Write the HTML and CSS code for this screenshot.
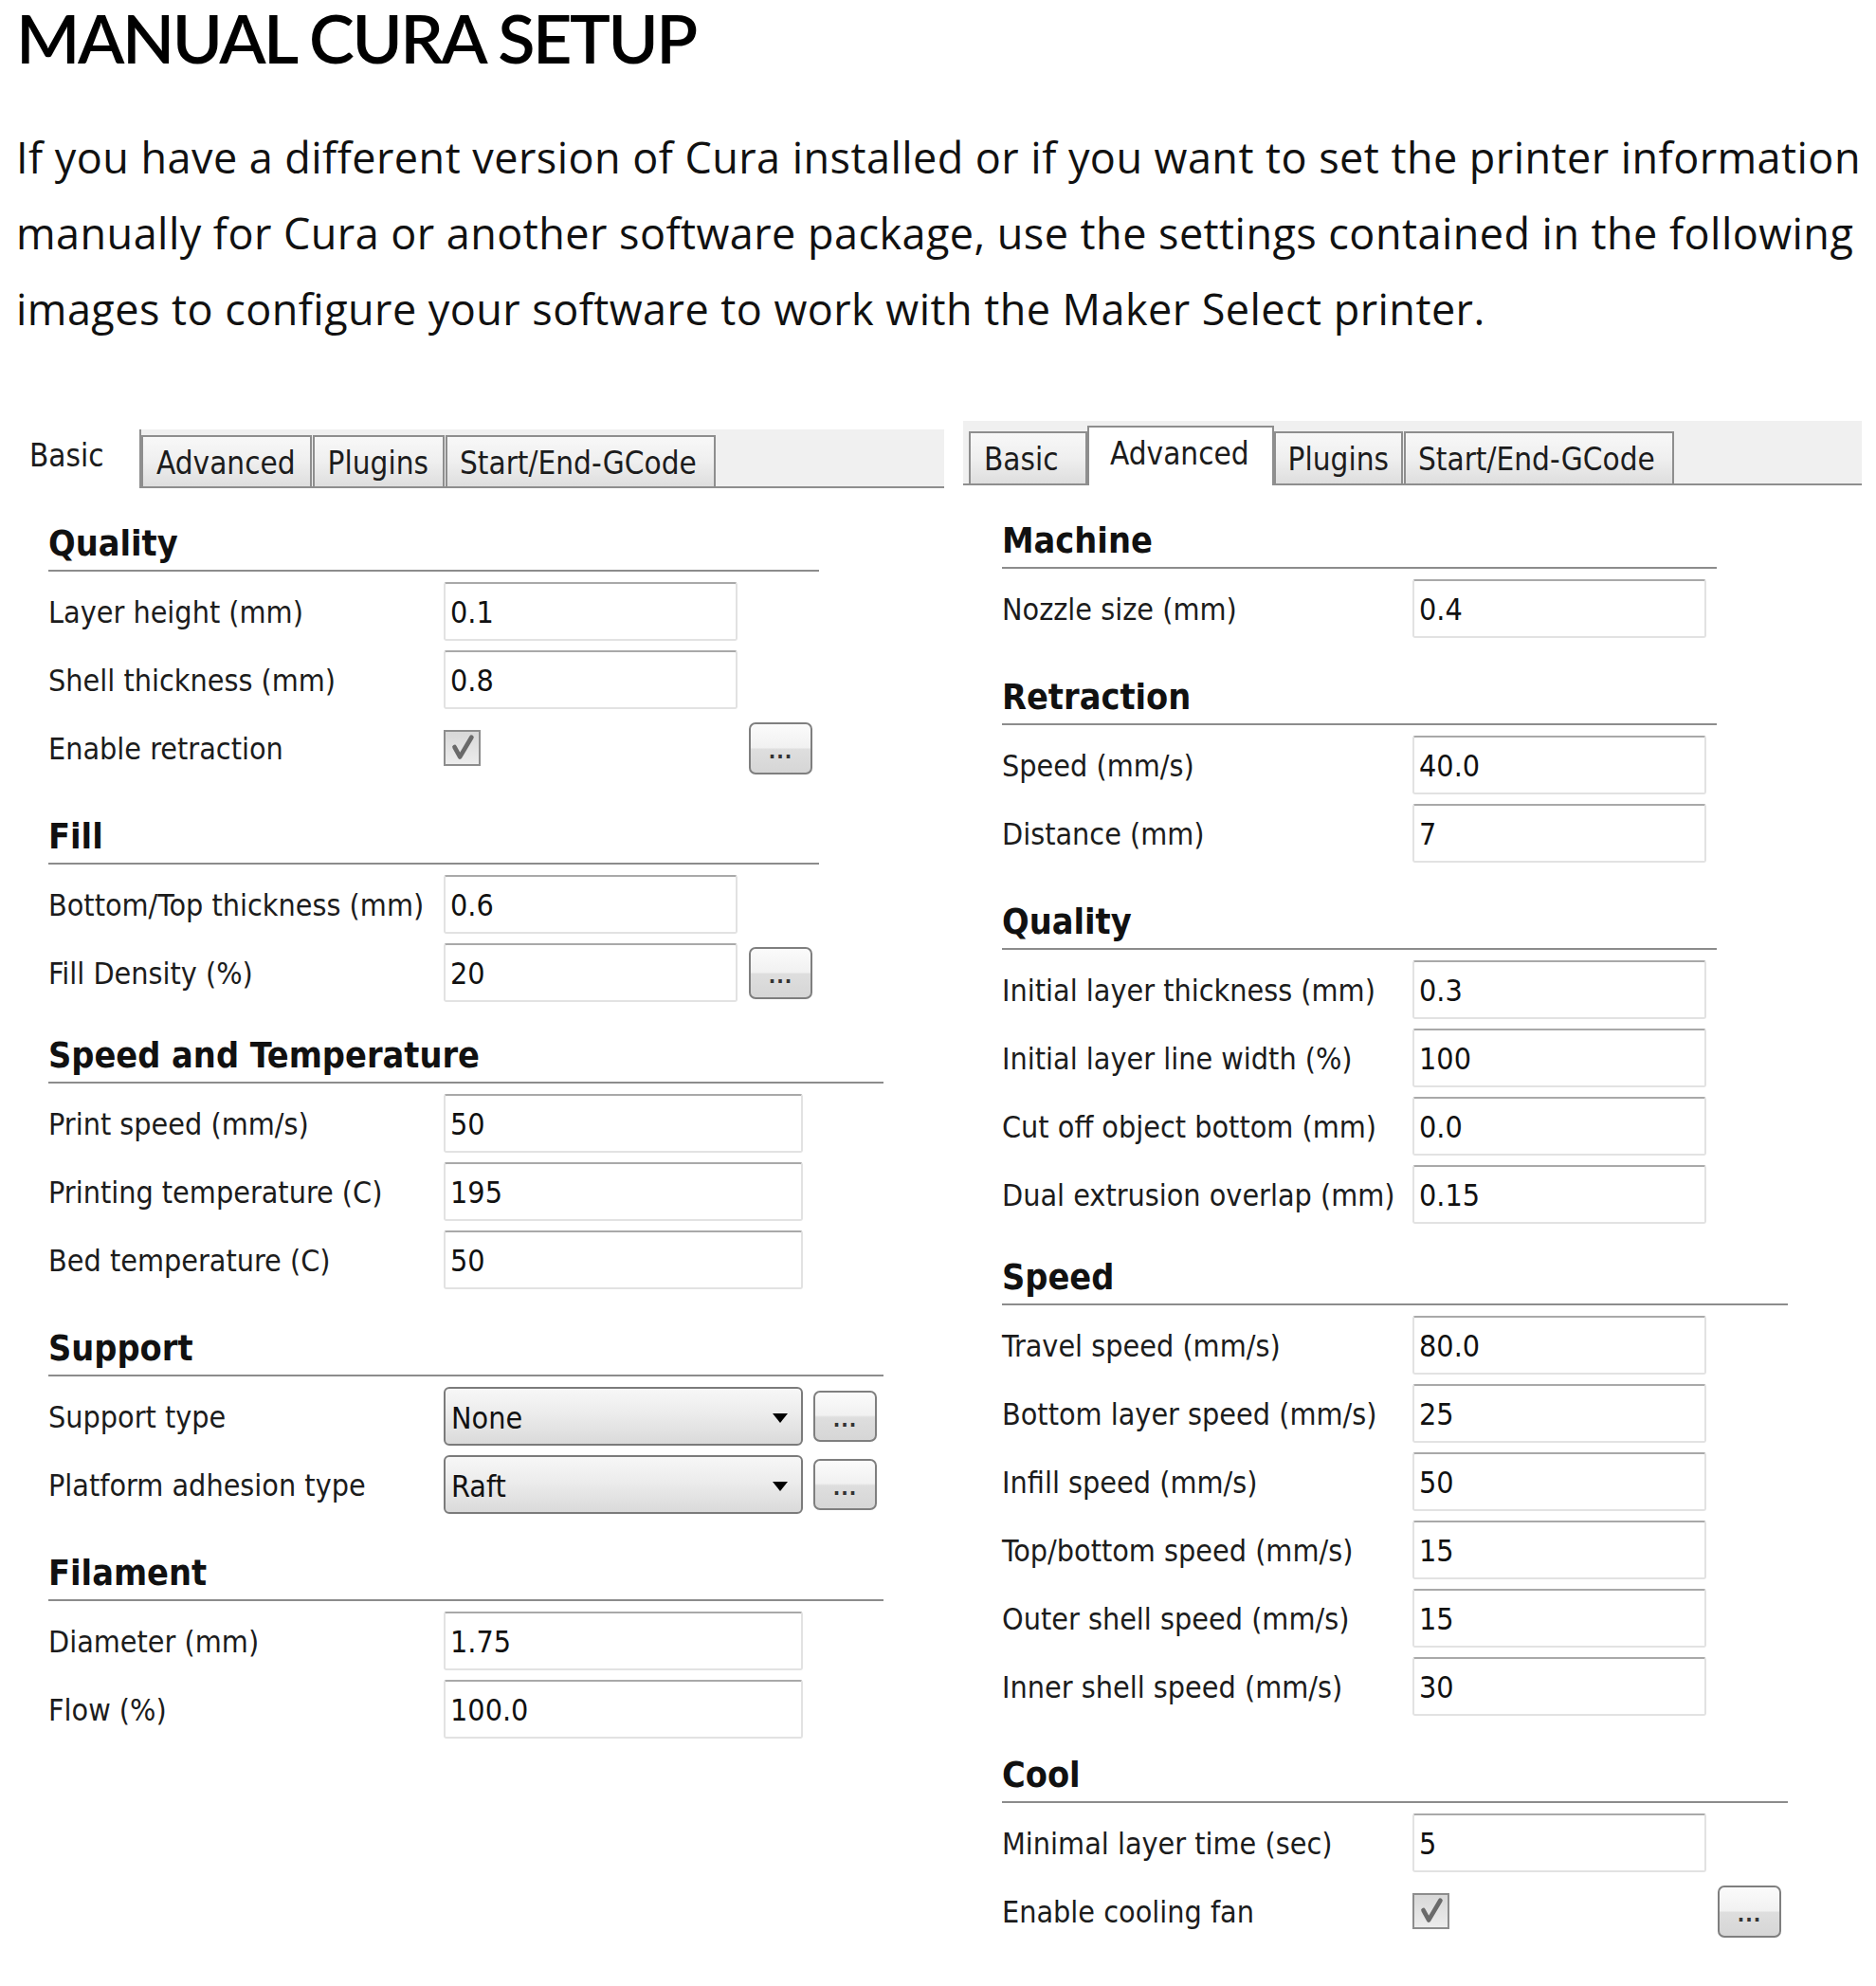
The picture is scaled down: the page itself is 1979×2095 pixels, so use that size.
FILE: index.html
```html
<!DOCTYPE html>
<html lang="en">
<head>
<meta charset="utf-8">
<title>Manual Cura Setup</title>
<link rel="stylesheet" href="styles.css">
</head>
<body>
<div class="page">
  <h1 class="title">MANUAL CURA SETUP</h1>
  <p class="intro">If you have a different version of Cura installed or if you want to set the printer information<br>manually for Cura or another software package, use the settings contained in the following<br>images to configure your software to work with the Maker Select printer.</p>

  <div class="panels">
    <section class="panel panel-basic">
      <div class="tabbar">
        <div class="tab tab-active">Basic</div>
        <div class="tab">Advanced</div>
        <div class="tab">Plugins</div>
        <div class="tab">Start/End-GCode</div>
      </div>
      <div class="panel-body">
        <div class="group group-narrow">
          <h2 class="group-title">Quality</h2>
          <div class="row"><span class="label">Layer height (mm)</span><span class="field">0.1</span></div>
          <div class="row"><span class="label">Shell thickness (mm)</span><span class="field">0.8</span></div>
          <div class="row"><span class="label">Enable retraction</span><span class="check-cell"><span class="check"><svg viewBox="0 0 36 34" width="34" height="32"><path d="M9 16 L15 27 L28 5" fill="none" stroke="#6a6a6a" stroke-width="5" stroke-linecap="round" stroke-linejoin="round"/></svg></span></span><span class="more">...</span></div>
        </div>
        <div class="group group-narrow">
          <h2 class="group-title">Fill</h2>
          <div class="row"><span class="label">Bottom/Top thickness (mm)</span><span class="field">0.6</span></div>
          <div class="row"><span class="label">Fill Density (%)</span><span class="field">20</span><span class="more">...</span></div>
        </div>
        <div class="group group-wide group-tight">
          <h2 class="group-title">Speed and Temperature</h2>
          <div class="row"><span class="label">Print speed (mm/s)</span><span class="field">50</span></div>
          <div class="row"><span class="label">Printing temperature (C)</span><span class="field">195</span></div>
          <div class="row"><span class="label">Bed temperature (C)</span><span class="field">50</span></div>
        </div>
        <div class="group group-wide">
          <h2 class="group-title">Support</h2>
          <div class="row"><span class="label">Support type</span><span class="select">None<svg class="caret" viewBox="0 0 16 10" width="16" height="10"><path d="M0 0 H16 L8 10 Z" fill="#000"/></svg></span><span class="more more-small">...</span></div>
          <div class="row"><span class="label">Platform adhesion type</span><span class="select">Raft<svg class="caret" viewBox="0 0 16 10" width="16" height="10"><path d="M0 0 H16 L8 10 Z" fill="#000"/></svg></span><span class="more more-small">...</span></div>
        </div>
        <div class="group group-wide">
          <h2 class="group-title">Filament</h2>
          <div class="row"><span class="label">Diameter (mm)</span><span class="field">1.75</span></div>
          <div class="row"><span class="label">Flow (%)</span><span class="field">100.0</span></div>
        </div>
      </div>
    </section>

    <section class="panel panel-advanced">
      <div class="tabbar">
        <div class="tab tab-basic">Basic</div>
        <div class="tab tab-active">Advanced</div>
        <div class="tab">Plugins</div>
        <div class="tab">Start/End-GCode</div>
      </div>
      <div class="panel-body">
        <div class="group group-narrow">
          <h2 class="group-title">Machine</h2>
          <div class="row"><span class="label">Nozzle size (mm)</span><span class="field">0.4</span></div>
        </div>
        <div class="group group-narrow">
          <h2 class="group-title">Retraction</h2>
          <div class="row"><span class="label">Speed (mm/s)</span><span class="field">40.0</span></div>
          <div class="row"><span class="label">Distance (mm)</span><span class="field">7</span></div>
        </div>
        <div class="group group-narrow">
          <h2 class="group-title">Quality</h2>
          <div class="row"><span class="label">Initial layer thickness (mm)</span><span class="field">0.3</span></div>
          <div class="row"><span class="label">Initial layer line width (%)</span><span class="field">100</span></div>
          <div class="row"><span class="label">Cut off object bottom (mm)</span><span class="field">0.0</span></div>
          <div class="row"><span class="label">Dual extrusion overlap (mm)</span><span class="field">0.15</span></div>
        </div>
        <div class="group group-wide group-tight">
          <h2 class="group-title">Speed</h2>
          <div class="row"><span class="label">Travel speed (mm/s)</span><span class="field">80.0</span></div>
          <div class="row"><span class="label">Bottom layer speed (mm/s)</span><span class="field">25</span></div>
          <div class="row"><span class="label">Infill speed (mm/s)</span><span class="field">50</span></div>
          <div class="row"><span class="label">Top/bottom speed (mm/s)</span><span class="field">15</span></div>
          <div class="row"><span class="label">Outer shell speed (mm/s)</span><span class="field">15</span></div>
          <div class="row"><span class="label">Inner shell speed (mm/s)</span><span class="field">30</span></div>
        </div>
        <div class="group group-wide">
          <h2 class="group-title">Cool</h2>
          <div class="row"><span class="label">Minimal layer time (sec)</span><span class="field">5</span></div>
          <div class="row"><span class="label">Enable cooling fan</span><span class="check-cell"><span class="check"><svg viewBox="0 0 36 34" width="34" height="32"><path d="M9 16 L15 27 L28 5" fill="none" stroke="#6a6a6a" stroke-width="5" stroke-linecap="round" stroke-linejoin="round"/></svg></span></span><span class="more">...</span></div>
        </div>
      </div>
    </section>
  </div>
</div>
</body>
</html>
```

FILE: styles.css
```css
html, body {
  margin: 0;
  padding: 0;
  background: #ffffff;
}

.page {
  padding: 0 0 0 17px;
  color: #000;
}

.title {
  margin: 3px 0 0 0;
  font-family: "Lato", "Open Sans", sans-serif;
  font-weight: 600;
  font-size: 72px;
  line-height: 72px;
  letter-spacing: -2.5px;
  color: #000;
}

.intro {
  margin: 51px 0 0 0;
  font-family: "Open Sans", "Lato", sans-serif;
  font-size: 45px;
  line-height: 80px;
  letter-spacing: 0.45px;
  color: #111;
  white-space: nowrap;
}

.panels {
  display: flex;
  align-items: flex-start;
  gap: 20px;
  margin-top: 78px;
  font-family: "DejaVu Sans Condensed", "DejaVu Sans", sans-serif;
  font-stretch: condensed;
  font-size: 32px;
  color: #1c1c1c;
}

.panel-basic { width: 979px; }
.panel-advanced { width: 948px; }

/* tab strip */
.tabbar {
  display: flex;
  align-items: flex-end;
  background: #f0f0f0;
  border-bottom: 2px solid #8e8e8e;
  box-sizing: border-box;
  font-size: 33px;
}

.panel-basic .tabbar {
  margin-top: 9px;
  height: 62px;
}

.panel-advanced .tabbar {
  height: 68px;
  padding-left: 6px;
}

.tab {
  box-sizing: border-box;
  height: 54px;
  padding: 8px 13px 0 13px;
  line-height: 1.2;
  border: 2px solid #8e8e8e;
  border-bottom: none;
  background: linear-gradient(#f8f8f8 0%, #efefef 50%, #dedede 100%);
  white-space: nowrap;
  margin-right: 1px;
}

.tab:last-child {
  padding-right: 18px;
}

.panel-basic .tab:nth-child(2) {
  padding: 8px 15px 0 14px;
}

.panel-basic .tab:nth-child(3) {
  padding: 8px 15px 0 14px;
}

.panel-advanced .tab {
  height: 55px;
}

.panel-advanced .tab-basic {
  width: 125px;
  padding-left: 14px;
}

.tab-active {
  background: #ffffff;
  margin-bottom: -2px;
}

.panel-basic .tab-active {
  width: 132px;
  height: 62px;
  padding: 8px 0 0 14px;
  border-top: none;
  border-left: none;
  margin-right: 0;
}

.panel-advanced .tab-active {
  height: 63px;
  padding: 8px 24px 0 22px;
  margin-right: 0;
  margin-left: -1px;
}

/* body */
.panel-basic .panel-body { padding-left: 34px; }
.panel-advanced .panel-body { padding-left: 41px; }

.group { margin-top: 4px; }
.group:first-child { margin-top: 0; }

.group-title {
  box-sizing: border-box;
  height: 88px;
  margin: 0 0 11px 0;
  padding-bottom: 5px;
  display: flex;
  align-items: flex-end;
  font-size: 37.5px;
  font-weight: 700;
  line-height: 1.2;
  color: #111;
  border-bottom: 2px solid #8c8c8c;
}

.group-tight .group-title { height: 82px; }

.panel-basic .group-narrow .group-title { width: 813px; }
.panel-basic .group-wide .group-title { width: 881px; }
.panel-advanced .group-narrow .group-title { width: 754px; }
.panel-advanced .group-wide .group-title { width: 829px; }

.row {
  display: flex;
  align-items: center;
  height: 62px;
  margin-bottom: 10px;
}

.row:last-child { margin-bottom: 0; }

.label {
  flex: none;
  padding-top: 2px;
  white-space: nowrap;
}

.panel-basic .label { width: 417px; }
.panel-advanced .label { width: 433px; }

.field {
  flex: none;
  box-sizing: border-box;
  width: 310px;
  height: 62px;
  display: flex;
  align-items: center;
  padding: 1px 0 0 5px;
  border: 2px solid #e2e2e2;
  border-top-color: #a9a9a9;
  border-radius: 3px;
  background: #fff;
  color: #111;
}

.panel-basic .group-wide .field { width: 379px; }

.check-cell {
  flex: none;
  width: 310px;
  display: flex;
  align-items: center;
}

.check {
  box-sizing: border-box;
  width: 39px;
  height: 38px;
  border: 2px solid #8d8d8d;
  background: linear-gradient(#d8d8d8, #ececec);
  display: flex;
  align-items: center;
  justify-content: center;
}

.select {
  flex: none;
  box-sizing: border-box;
  width: 379px;
  height: 62px;
  display: flex;
  align-items: center;
  justify-content: space-between;
  padding: 3px 14px 0 6px;
  border: 2px solid #7b7b7b;
  border-radius: 6px;
  background: linear-gradient(#f7f7f7 0%, #ececec 45%, #dadada 100%);
  color: #111;
}

.caret { flex: none; }

.more {
  flex: none;
  box-sizing: border-box;
  width: 67px;
  height: 55px;
  margin-left: 12px;
  display: flex;
  align-items: center;
  justify-content: center;
  padding-top: 6px;
  border: 2px solid #7f7f7f;
  border-radius: 7px;
  background: linear-gradient(#fbfbfb 0%, #f1f1f1 48%, #dedede 52%, #d6d6d6 100%);
  font-family: "DejaVu Sans", sans-serif;
  font-size: 22px;
  font-weight: 700;
  letter-spacing: 1px;
  color: #333;
}

.more-small {
  height: 54px;
  margin-left: 11px;
}
```
